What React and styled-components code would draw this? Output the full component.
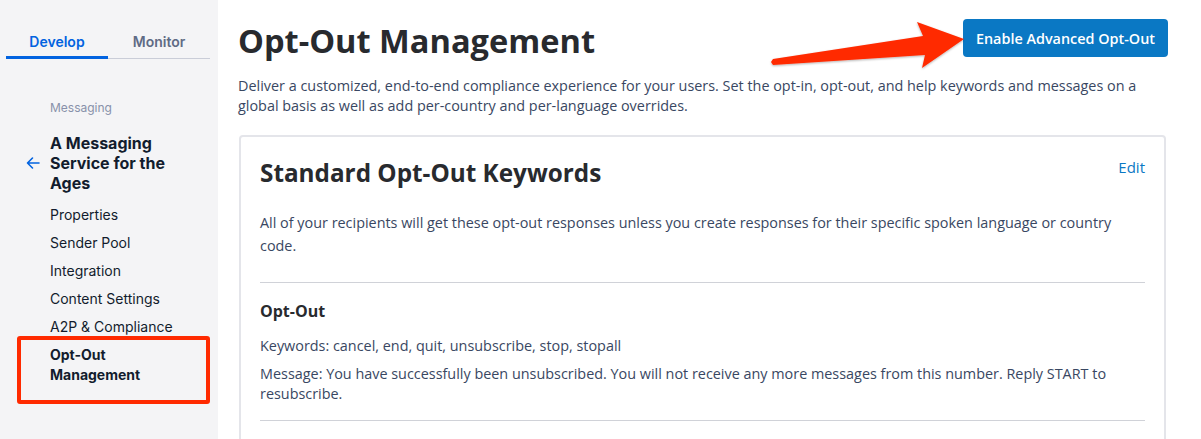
import styled, { createGlobalStyle } from 'styled-components';

const GlobalStyle = createGlobalStyle`
  html, body {
    margin: 0;
    padding: 0;
    background: #ffffff;
  }
  body {
    font-family: "Open Sans", "Liberation Sans", sans-serif;
    color: #282a2e;
  }
`;

const navItems = ['Properties', 'Sender Pool', 'Integration', 'Content Settings', 'A2P & Compliance'];

function App() {
  return (
    <Page>
      <GlobalStyle />
      <Sidebar>
        <Tabs>
          <Tab active>Develop</Tab>
          <Tab>Monitor</Tab>
        </Tabs>
        <Section>Messaging</Section>
        <ServiceRow>
          <BackArrow viewBox="0 0 16 16" width="16" height="16">
            <path d="M14 8H2.5M7.5 3 2.5 8l5 5" fill="none" stroke="#0263e0" strokeWidth="1.6" strokeLinecap="round" strokeLinejoin="round" />
          </BackArrow>
          <ServiceName>A Messaging Service for the Ages</ServiceName>
        </ServiceRow>
        <NavList>
          {navItems.map(item => (
            <NavItem key={item}>{item}</NavItem>
          ))}
        </NavList>
        <Highlight>
          <NavItem active>Opt-Out Management</NavItem>
        </Highlight>
      </Sidebar>
      <Main>
        <Header>
          <Title>Opt-Out Management</Title>
          <PrimaryButton>Enable Advanced Opt-Out</PrimaryButton>
          <Arrow viewBox="0 0 200 56" width="200" height="56">
            <defs>
              <filter id="shadow" x="-10%" y="-20%" width="120%" height="140%">
                <feDropShadow dx="0" dy="1" stdDeviation="1" floodColor="#000" floodOpacity="0.3" />
              </filter>
            </defs>
            <polygon
              points="3,44 5,41 155,18 149,4 196,21 154,50 157,37 5,47"
              fill="#ff2a00"
              strokeLinejoin="round"
              filter="url(#shadow)"
            />
          </Arrow>
        </Header>
        <Intro>
          Deliver a customized, end-to-end compliance experience for your users. Set the opt-in, opt-out, and help keywords and messages on a global basis as well as add per-country and per-language overrides.
        </Intro>
        <Card>
          <CardHeader>
            <CardTitle>Standard Opt-Out Keywords</CardTitle>
            <EditLink>Edit</EditLink>
          </CardHeader>
          <CardText>
            All of your recipients will get these opt-out responses unless you create responses for their specific spoken language or country code.
          </CardText>
          <Divider gap={25} />
          <Block>
            <BlockTitle>Opt-Out</BlockTitle>
            <Detail>Keywords: cancel, end, quit, unsubscribe, stop, stopall</Detail>
            <Detail>Message: You have successfully been unsubscribed. You will not receive any more messages from this number. Reply START to resubscribe.</Detail>
          </Block>
          <Divider gap={16} />
        </Card>
      </Main>
    </Page>
  );
}

export default App;

const Page = styled.div`
  display: flex;
  width: 1201px;
  height: 439px;
  overflow: hidden;
`;

const Sidebar = styled.nav`
  width: 218px;
  flex-shrink: 0;
  background: #f4f4f6;
  padding: 24px 8px 0 6px;
  box-sizing: border-box;
  font-family: Inter, "Noto Sans", sans-serif;
`;

const Tabs = styled.div`
  display: flex;
  border-bottom: 1px solid #cacdd8;
`;

const Tab = styled.div`
  flex: 1;
  text-align: center;
  font-size: 14px;
  font-weight: 600;
  line-height: 20px;
  padding: 8px 0 7px;
  color: ${props => (props.active ? '#0263e0' : '#606b85')};
  box-shadow: ${props => (props.active ? 'inset 0 -3px 0 #0263e0' : 'none')};
  margin-bottom: -1px;
`;

const Section = styled.div`
  margin: 40px 0 0 44px;
  font-size: 12px;
  line-height: 18px;
  color: #8891aa;
`;

const ServiceRow = styled.div`
  display: flex;
  align-items: center;
  margin-top: 16px;
  padding-left: 19px;
`;

const BackArrow = styled.svg`
  flex-shrink: 0;
  margin-right: 9px;
`;

const ServiceName = styled.div`
  font-size: 16px;
  font-weight: 700;
  line-height: 20px;
  color: #121c2d;
  width: 130px;
`;

const NavList = styled.div`
  margin-top: 8px;
  display: flex;
  flex-direction: column;
`;

const NavItem = styled.div`
  padding-left: 44px;
  font-size: 14px;
  line-height: 20px;
  padding-top: 4px;
  padding-bottom: 4px;
  color: #121c2d;
  font-weight: ${props => (props.active ? 700 : 400)};
  width: ${props => (props.active ? '120px' : 'auto')};
`;

const Highlight = styled.div`
  margin: -5px 0 0 11px;
  border: 4px solid #ff2a00;
  border-radius: 3px;
  height: 68px;
  box-sizing: border-box;

  ${NavItem} {
    padding-left: 29px;
    padding-top: 5px;
  }
`;

const Main = styled.main`
  flex: 1;
  padding: 18px 33px 0 20px;
  box-sizing: border-box;
  min-width: 0;
`;

const Header = styled.div`
  position: relative;
  display: flex;
  justify-content: space-between;
  align-items: flex-start;
`;

const Title = styled.h1`
  margin: 0;
  font-size: 32.6px;
  font-weight: 700;
  line-height: 46px;
  color: #282a2e;
`;

const PrimaryButton = styled.button`
  margin-top: 1px;
  height: 38px;
  padding: 0 13px;
  border: none;
  border-radius: 4px;
  background: #0a78c4;
  color: #ffffff;
  font-family: "Open Sans", "Liberation Sans", sans-serif;
  font-size: 14.4px;
  font-weight: 600;
`;

const Arrow = styled.svg`
  position: absolute;
  left: 530px;
  top: 0;
  overflow: visible;
`;

const Intro = styled.p`
  margin: 12px 0 0;
  font-size: 14.4px;
  line-height: 20px;
  color: #394762;
`;

const Card = styled.section`
  margin: 19px 2px 0 1px;
  border: 2px solid #e4e5ea;
  border-radius: 4px;
  padding: 14px 19px 0;
  height: 400px;
  box-sizing: border-box;
`;

const CardHeader = styled.div`
  display: flex;
  justify-content: space-between;
  align-items: flex-start;
`;

const CardTitle = styled.h2`
  margin: 6px 0 0;
  font-size: 24.3px;
  font-weight: 700;
  line-height: 32px;
  color: #282a2e;
`;

const EditLink = styled.a`
  margin-top: 5px;
  font-size: 15px;
  line-height: 22px;
  color: #0a78c4;
  cursor: pointer;
`;

const CardText = styled.p`
  margin: 22px 0 0;
  font-size: 14.4px;
  line-height: 23px;
  color: #394762;
`;

const Divider = styled.hr`
  margin: ${props => props.gap}px 0 0;
  border: none;
  border-top: 1px solid #d0d2d8;
`;

const Block = styled.div`
  padding-top: 17px;
`;

const BlockTitle = styled.h3`
  margin: 0 0 14px;
  font-size: 16px;
  font-weight: 700;
  line-height: 22px;
  color: #282a2e;
`;

const Detail = styled.p`
  margin: 0 0 8px;
  font-size: 14.4px;
  line-height: 20px;
  color: #394762;

  &:last-child {
    margin-bottom: 0;
  }
`;
